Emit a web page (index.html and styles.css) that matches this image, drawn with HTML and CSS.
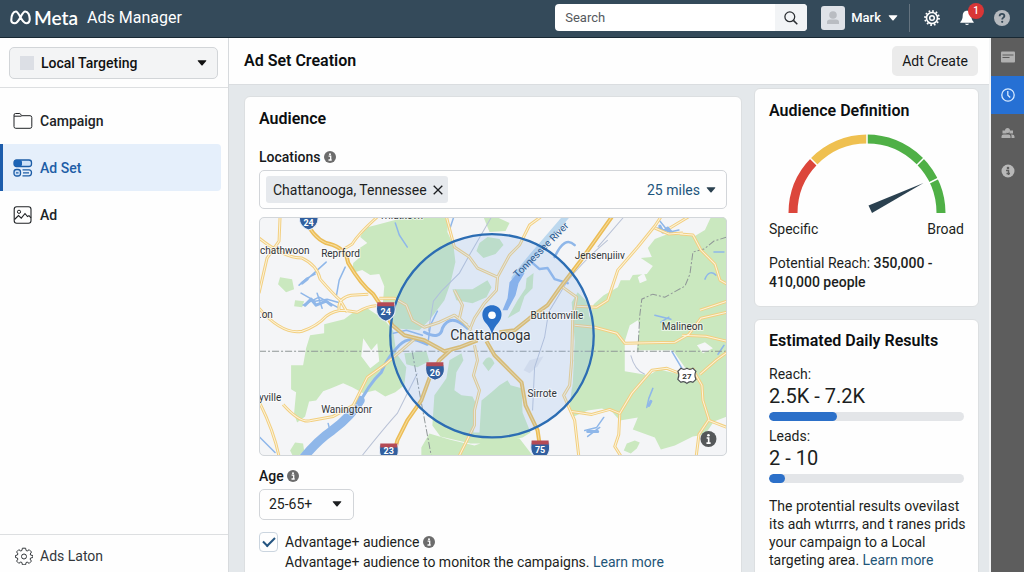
FILE: index.html
```html
<!DOCTYPE html>
<html lang="en">
<head>
<meta charset="utf-8">
<title>Meta Ads Manager</title>
<link rel="stylesheet" href="styles.css">
</head>
<body>
<svg class="defs" aria-hidden="true">
  <symbol id="caret" viewBox="0 0 10 6"><path d="M1.200.3h7.600q.9 0 .4.8L5.600 5.300q-.6.600-1.200 0L.8 1.100Q.3.3 1.200.3z" fill="currentColor"/></symbol>
  <symbol id="info" viewBox="0 0 12 12"><circle cx="6" cy="6" r="6" fill="currentColor"/><circle cx="6" cy="3.200" r="1" fill="#fff"/><path d="M4.600 5.200h2.100v3.500M4.500 9h3.200" fill="none" stroke="#fff" stroke-width="1.300"/></symbol>
</svg>

<header class="header">
  <a class="brand" href="#">
    <svg class="brand-mark" viewBox="0 0 20 14" aria-hidden="true"><path d="M1.200 9.500C1.200 5 3 1.300 5.600 1.300c3.200 0 5.200 11.200 9.800 11.200 2.300 0 3.400-1.600 3.400-4 0-3.800-1.700-7.200-4.300-7.200-3.500 0-5.600 11.200-10 11.200-2 0-3.300-1.200-3.300-3z" fill="none" stroke="currentColor" stroke-width="2"/></svg>
    <span class="brand-name">Meta</span>
    <span class="brand-product">Ads Manager</span>
  </a>
  <form class="search" role="search">
    <input class="search-input" type="search" placeholder="Search" aria-label="Search">
    <button class="search-button" type="button" aria-label="Run search"><svg viewBox="0 0 14 14" width="14" height="14"><circle cx="5.800" cy="5.800" r="4.900" fill="none" stroke="currentColor" stroke-width="1.300"/><path d="M9.400 9.400 13.300 13.300" stroke="currentColor" stroke-width="1.500"/></svg></button>
  </form>
  <button class="user" type="button">
    <svg class="avatar" viewBox="0 0 24 24" aria-hidden="true"><rect width="24" height="24" rx="3" fill="#dfe2e8"/><circle cx="12" cy="9" r="3.800" fill="#b9bcc2"/><path d="M6 18v-2q0-2.500 3-2.500h6q3 0 3 2.500v2z" fill="#b9bcc2"/></svg>
    <span>Mark</span>
    <svg class="caret" aria-hidden="true"><use href="#caret"/></svg>
  </button>
  <div class="tools">
    <button class="tool" type="button" aria-label="Settings"><svg viewBox="0 0 16 16" width="16" height="16"><circle cx="8" cy="8" r="7" fill="none" stroke="#fff" stroke-width="1.800" stroke-dasharray="1.700 1.965"/><circle cx="8" cy="8" r="5.500" fill="none" stroke="#fff" stroke-width="1.600"/><circle cx="8" cy="8" r="2.300" fill="none" stroke="#fff" stroke-width="1.500"/></svg></button>
    <button class="tool" type="button" aria-label="Notifications, 1 new"><svg viewBox="0 0 16 16" width="16" height="16"><path d="M8 .8c-3 0-4.200 2.300-4.300 5C3.600 9 3 10.200 1.300 11.900v.9h13.400v-.9C13 10.200 12.400 9 12.300 5.800 12.200 3.100 11 .8 8 .8zM5.800 13.700q2.200 2.600 4.400 0z" fill="#fff"/></svg><span class="badge">1</span></button>
    <button class="tool" type="button" aria-label="Help"><svg viewBox="0 0 16 16" width="16" height="16"><circle cx="8" cy="8" r="8" fill="#b6babf"/><path d="M5.600 6.200Q5.700 3.900 8 3.900t2.400 2.100c0 1.500-2.200 1.700-2.200 3.400" fill="none" stroke="#354857" stroke-width="1.800"/><circle cx="8.200" cy="11.800" r="1.100" fill="#354857"/></svg></button>
  </div>
</header>

<div class="shell">
  <aside class="sidebar">
    <div class="account">
      <label class="select account-select">
        <span class="swatch"></span>
        <select aria-label="Ad account"><option>Local Targeting</option></select>
        <svg class="caret" aria-hidden="true"><use href="#caret"/></svg>
      </label>
    </div>
    <nav class="nav">
      <a class="nav-item" href="#"><svg viewBox="0 0 20 18" aria-hidden="true"><path d="M1 4.200V3q0-1.500 1.500-1.500h4.300L9 3.700h8q1.800 0 1.800 1.800v9q0 1.800-1.800 1.800H2.800Q1 16.300 1 14.500V4.200h7.500" fill="none" stroke="currentColor"/></svg>Campaign</a>
      <a class="nav-item nav-item-active" href="#" aria-current="page"><svg viewBox="0 0 20 18" aria-hidden="true"><rect x="1" y="1" width="17.500" height="6.500" rx="2.500" fill="#cfe2f8" stroke="currentColor" stroke-width="1.300"/><rect x="1" y="1" width="8" height="6.500" rx="2" fill="#1b63b5"/><rect x="1" y="10.500" width="6.500" height="6.500" rx="2.500" fill="#cfe2f8" stroke="currentColor" stroke-width="1.300"/><path d="M3 13.800h2.500M9.500 10.800H16q2.500 0 2.500 3t-2.500 3H9.500M10 13.800h6" fill="none" stroke="currentColor" stroke-width="1.300"/></svg>Ad Set</a>
      <a class="nav-item" href="#"><svg viewBox="0 0 20 18" aria-hidden="true"><rect x="1.200" y=".7" width="16.800" height="16.600" rx="2.500" fill="none" stroke="currentColor" stroke-width="1.100"/><circle cx="6" cy="5.800" r="1.600" fill="none" stroke="currentColor"/><path d="m1.500 13.500 4-4 2.800 2.600L12 7.500l2.500 3L16 9.600l2 2.200" fill="none" stroke="currentColor" stroke-width="1.100"/></svg>Ad</a>
    </nav>
    <a class="side-footer" href="#"><svg viewBox="0 0 18 18" width="18" height="18" aria-hidden="true"><path d="M7.400 1.200h3.200l.5 2.300 1.100.5 2-1.300 2.300 2.300-1.300 2 .4 1.100 2.300.4v2l-2.300.500-.5 1.100 1.300 2-2.200 2.300-2-1.300-1.100.4-.5 2.300H7.400l-.5-2.300-1.100-.5-2 1.300-2.200-2.200 1.300-2-.5-1.100-2-.5v-2l2-.5.5-1.100-1.300-2 2.200-2.200 2 1.300 1.100-.5z" fill="none" stroke="currentColor" stroke-linejoin="round"/><circle cx="9" cy="9.500" r="2.500" fill="none" stroke="currentColor"/></svg>Ads Laton</a>
  </aside>

  <main class="main">
    <div class="titlebar">
      <h1>Ad Set Creation</h1>
      <button class="create" type="button">Adt Create</button>
    </div>
    <div class="content">
      <section class="card audience">
        <h2>Audience</h2>
        <label class="field-label" for="location">Locations <svg class="info"><use href="#info"/></svg></label>
        <div class="location">
          <span class="chip">Chattanooga, Tennessee<button type="button" aria-label="Remove Chattanooga, Tennessee"><svg viewBox="0 0 10 10" width="10" height="10"><path d="m.7.7 8.600 8.600m0-8.600L.7 9.300" stroke="currentColor" stroke-width="1.300"/></svg></button></span>
          <input class="location-input" id="location" type="text">
          <label class="select radius">
            <select aria-label="Radius"><option>25 miles</option></select>
            <svg class="caret" aria-hidden="true"><use href="#caret"/></svg>
          </label>
        </div>
        <svg class="map" viewBox="260 217 467 238" role="img" aria-label="Map of the area around Chattanooga">
          <rect x="260" y="217" width="467" height="239" fill="#f4f5f7"/>
          <g fill="#cae8bf">
            <path d="M407 217h42l-1 15 6 13 2 17-5 21-6 17-15 20-10 10-25-2-8-8-4-10 2-24-5-12-9 1-8-5-10 3 1-10 7-6-2-8 9-6-7-6 4-9 12-3z"/>
            <path d="M480 243l8-6 12 2 4 6-8 9-12 4-7-7zM453 289h20l15-9 4 7-5 10-14 6-16-3zM484 217h13l13 6-4 8-16 1z"/>
            <path d="M281 277l12 2 2 10-8 3-8-8zM296 300l9 1-2 6-8-1zM291 450l5-8 8 1 1 7-5 5-6 1z"/>
            <path d="M311 335l14-2v-9l20-5 8-6 15-5 9 6 8 5 9 12 3 22 10 14-2 18-9 7-10 4-10-6-12 3-11-6-9-4-12 5-8 3-7 9-7 1-4 15-8 6-3-9 2-21-5-3v-24h12l3-17z"/>
            <path d="M727 217h-16l-6 13-10 6-27-2-13 5-7 9 4 9-11 1 12 8-6 8-14 1-3 5h-9l-3 7-14 8-10 9-6 18-4 18-10 20 2 12-4 17-2 17 4 10 14-6 14-2 10 3 8 9 18-3-5 12 22 8 6 12 14-4 18-9 12-2 9-13 16-6z"/>
            <path d="M433 425l2-30 5-7 7-10 3-18 12-7 2 7-7 12-2 18 7 5 11 1 3 6-2 30h6l2-32 10-8 8-7 8-5 3 5 11 3 1 24 8 20-8 5-32 6h-20l-30-7zM422 447l8-14 20 6 25 6 18-6 27-1 13 17H422zM624 450l3-7 8-3 5 2-3 6-6 5zM508 318l10-18 8-12 1-10 7-5-1 15-8 8-5 15zM483 363q7-12 12 0l-6 8zM405 353l22-2 3 10-12 6-11-3zM572 302l6-10 10 10 4 40-10 40-9 4 2-45z"/>
          </g>
          <path d="M524 370l6-10 14-4-6 10-8 7z" fill="#e3e6ec"/>
          <path d="M364 338l8 12 6-7 2 18-9 7-9-12zM625 371v-30l5-16 8-5 2 5-3 25h36l14 20-8 4-20-5-10 6zM638 277l6-4 3 7-7 3zM697 345l8-3 8 6-10 5z" fill="#f5f6f8"/>
          <g fill="none" stroke="#8fb7e9" stroke-linejoin="round" stroke-linecap="round">
            <path d="M302 460q16-20 31-30 20-15 28-30" stroke-width="9"/>
            <path d="M358 407q12-24 24-35 6-15 18-27 8-8 18-5l10 4M425 332q16 8 18-4 8-16 25 0" stroke-width="3"/>
            <path d="M515 278l15-19 37-43" stroke-width="6" stroke="#bcd8ee"/>
            <path d="M532 262l8 7 8-1 7 11 13 4M555 257q10-22 20-12" stroke-width="2.500"/>
            <path d="M429 340l2-15 7-14M394 333l13-3 16 5M455 215l-5 15M724 345l-6 9M724 252h-10M705 279q4-10 11-4" stroke-width="1.500"/>
            <path d="M300 285l8-7 8-4M306 281l21-19M302 293l14 8 12-2 14 4M304 305l16-8 18 10M318 293l5 15M346 267l-6 13-3 17M396 223l4 12 8 12M672 351l10 17M653 388l-4 10-2 9M655 315l16 4M661 322l8-5M585 430l12-3 7-10M588 436l12-9M658 228l12 4 9-2M660 221l8 10M329 423l1 4M260 436l16 16" stroke-width="1.500"/>
            <path d="M306 305l6-6 5 6 10-4 5 4M660 226l3 6 5-4 4 5M303 283l5-4M588 431h10M651 401l-2 4" stroke-width="3"/>
          </g>
          <path d="M503 310l5-12 2-16 7-8 8-1-6 10-3 12-8 15z" fill="#86b0ea"/>
          <g fill="none" stroke="#b9c2d6">
            <path d="M492 217l-22 38-10 18-18 18-8 10-5 30M608 240q-35 30-47 52l-12 20-4 25-10 30-2 43M624 217l-26 30"/>
            <path d="M363 455q24-30 35-42l20-40"/>
            <path d="M631 355q4 15 14 19"/>
          </g>
          <path d="M260 351h467M413 352l8 45 11 59M727 237l-13 4-10 8-11 3-3 22-5 12-20 11-12-3-11 5-2 16-2 37" fill="none" stroke="#8f9697" stroke-dasharray="7 2 2 2"/>
          <g fill="none" stroke="#f2cf80" stroke-width="3" stroke-linejoin="round">
            <path id="minor" d="M281 217l-1 24-12 17-8 35M260 238q25 20 43 20 15 7 18 21 13 15 20 21l7 12M259 307q24 28 44 24 15-5 24-15 8-6 18-6l13 2q14-8 22-6l10 5M378 217q-19 17-25 27l-13 8M340 310q-2-12 12-15l17-1M260 401q15 30 20 55M284 404q18 20 28 16l22-4 20-11 14-28 18-13 30-26M447 217l8 30 15 10 8 11 20 9-1 13-12 13-10 15-5 12M498 277l12-22 10-10 10-20 11-8M455 290l8 15-3 13 12 12M380 298h15l12 7 6 15 12 7 15-5 15-7 13 10M475 345l3 15-4 15 6 15-5 20v15l-15 30M563 287l14 10-4 23-1 40-2 25-6 10 11 25 4 35M575 325l20 2 22 6 8 10 50-1 14-8 12-16 26-6M682 335l24 1 21 5M572 411l20 3 18-5 10 4 12-20 20-23 15-2 10 4 18-3M620 414l-1 20-4 12 7 11M695 373l7 12 1 15 6 19-10 15-3 24M700 374l16-14 11-8M709 420l18 7M661 217l-6 9-17 21-20 23-10 30-11 7-20-1M680 234l13 1 8 15 14 14 5 16 7 4M670 228l20-12M655 228l14 6 14-1M700 310l27-9"/>
          </g>
          <use href="#minor" fill="none" stroke="#fcf3da"/>
          <g fill="none" stroke="#ebbd57" stroke-width="4" stroke-linejoin="round">
            <path id="major" d="M305 217q8 20 22 26 20 4 22 20 13 22 25 31l12 18 7 13 12 10 20 5 20 11 15-4 18-7M452 349l-12 11-10 18-8 22-14 20-10 20-4 17M500 332l15-2 15-12 18-13 12-17 20-26 32-45M487 341l8 14 15 15 12 12 4 23 12 25 4 27"/>
          </g>
          <use href="#major" fill="none" stroke="#f7dc9a"/>
          <circle cx="492.500" cy="335.500" r="101.500" fill="#8fb8f0" fill-opacity=".22" stroke="#2c6db3" stroke-width="2.300"/>
          <g class="map-labels">
            <text x="261" y="254">chathwoon</text><text x="322" y="257">Reprford</text><text x="575" y="259">Jensenµiiıv</text>
            <text x="260" y="318">.on</text><text x="531" y="319">Butıtomville</text><text x="662" y="330">Malineon</text>
            <text x="260" y="401">yville</text><text x="322" y="413">Waningtonr</text><text x="528" y="397">Sirrote</text>
            <text x="380" y="219">Trilatkovn</text>
            <text class="map-river" transform="translate(518 278) rotate(-45)">Tonnessee River</text>
            <text class="map-city" x="491" y="340">Chattanooga</text>
          </g>
          <g class="shields">
            <path d="M301 212h17q4 14-8.500 18-12-4-8.500-18zM378 303h17q4 14-8.500 18-12-4-8.500-18zM427 363h17q4 14-8.500 17-12-4-8.500-17zM381 444h17q4 14-8.500 18-12-4-8.500-18zM532 441h17q4 14-8.500 18-12-4-8.500-18z" fill="#315f9f" stroke="#e7edf7"/>
            <path d="M378 302h17v4h-17zM427 362h17v4h-17zM381 443h17v4h-17zM532 440h17v4h-17z" fill="#b54b55"/>
            <text x="309.500" y="226">24</text><text x="386.500" y="315">24</text><text x="435.500" y="376">26</text><text x="389.500" y="454">23</text><text x="540.500" y="453">75</text>
          </g>
          <path d="M681 368q3 2 6 0 3 2 6 0l3 3q-2 4 0 8l-3 3q-3-2-6 1-3-3-6-1l-3-3q2-4 0-8z" fill="#fff" stroke="#4c5053" stroke-width="1.200"/>
          <text class="map-route" x="687" y="379">27</text>
          <path d="M492.500 334q-2-7-6-11c-7-8-3-18 6-18s13 10 6 18q-4 4-6 11z" fill="#2a70c8"/><circle cx="492.500" cy="315" r="3.800" fill="#fff"/>
          <g transform="translate(701 431)"><circle cx="7.500" cy="7.500" r="8" fill="#55585a"/><circle cx="7.500" cy="3.800" r="1.300" fill="#fff"/><path d="M5.700 6.600h2v4.700M5.500 11.600h4.200" fill="none" stroke="#fff" stroke-width="1.600"/></g>
        </svg>
        <label class="field-label" for="age">Age <svg class="info"><use href="#info"/></svg></label>
        <div class="select age-select">
          <select id="age"><option>25-65+</option></select>
          <svg class="caret" aria-hidden="true"><use href="#caret"/></svg>
        </div>
        <div class="advantage">
          <input class="check" id="advantage" type="checkbox" checked>
          <div>
            <label for="advantage">Advantage+ audience <svg class="info"><use href="#info"/></svg></label>
            <p>Advantage+ audience to monitoʀ the campaigns. <a href="#">Learn more</a></p>
          </div>
        </div>
      </section>

      <div class="insights">
        <section class="card insight">
          <h2>Audience Definition</h2>
          <svg class="gauge" viewBox="0 0 158 80" role="img" aria-label="Audience gauge, close to broad">
            <g fill="none" stroke-width="9">
              <path d="M5 79A74 74 0 0 1 25.800 27.600" stroke="#dc463b"/>
              <path d="M25.800 27.600A74 74 0 0 1 79 5" stroke="#efc050"/>
              <path d="M79 5A74 74 0 0 1 153 79" stroke="#4fb046"/>
            </g>
            <path d="m20 22 11 11M79 0v12M138 22l-11 11M152 43.500l-14 7" stroke="#fff" stroke-width="1.500"/>
            <path d="m80.500 71.500 55-22.500L84 79z" fill="#2b4150"/>
          </svg>
          <div class="gauge-ends"><span>Specific</span><span>Broad</span></div>
          <p class="potential">Potential Reach: <strong>350,000 - 410,000 people</strong></p>
        </section>

        <section class="card insight results">
          <h2>Estimated Daily Results</h2>
          <div class="metric">
            <span>Reach:</span><strong>2.5K - 7.2K</strong>
            <div class="bar"><div class="bar-fill" style="width:35%"></div></div>
          </div>
          <div class="metric">
            <span>Leads:</span><strong>2 - 10</strong>
            <div class="bar"><div class="bar-fill" style="width:8%"></div></div>
          </div>
          <p class="note">The protential results ovevilast its aαh wtιrrrs, and t ranes prids your campaign to a Local targeting area. <a href="#">Learn more</a></p>
        </section>
      </div>
    </div>
  </main>

  <nav class="rail" aria-label="Tools">
    <a href="#" aria-label="Card"><svg viewBox="0 0 14 14"><rect y="1.500" width="14" height="11" rx="1" fill="#b0b0b0"/><path d="M1.500 5h11M1.500 7.500h7" stroke="#5d5d5d"/></svg></a>
    <a class="rail-active" href="#" aria-label="History"><svg viewBox="0 0 14 14"><circle cx="7" cy="7" r="6.200" fill="none" stroke="#d9ebff" stroke-width="1.300"/><path d="M6.800 3v4.200l2.400 2.300" fill="none" stroke="#d9ebff" stroke-width="1.300"/></svg></a>
    <a href="#" aria-label="People"><svg viewBox="0 0 14 14"><path d="M.5 12v-1.500Q.5 8.500 2.500 8.500h5q2 0 2 2V12zM10.500 12v-2q0-1-.6-1.500H11q2.500 0 2.500 2V12z" fill="#b0b0b0"/><circle cx="6.500" cy="4.500" r="2.500" fill="#b0b0b0"/><path d="M1.500 4.500h4v3h-4zM8.500 4.500h3.500v3H8.500z" fill="#b0b0b0"/></svg></a>
    <a href="#" aria-label="Information"><svg viewBox="0 0 14 14"><circle cx="7" cy="7" r="6.500" fill="#b8b8b8"/><circle cx="7" cy="4" r="1.300" fill="#5d5d5d"/><path d="M5 6.500h2.500V11M5.500 9.500h3.500" stroke="#5d5d5d" stroke-width="1.500" fill="none"/></svg></a>
  </nav>
</div>
</body>
</html>
```
FILE: styles.css
```css
* { box-sizing: border-box; }
body {
  margin: 0;
  height: 100vh;
  display: flex;
  flex-direction: column;
  overflow: hidden;
  font: 14px/20px Roboto, "Liberation Sans", sans-serif;
  color: #1c1e21;
  background: #e4e8eb;
}
h1, h2, p { margin: 0; }
h1, h2 { font-size: 16px; line-height: 20px; font-weight: 600; color: #0c0e10; }
button, input, select { font: inherit; color: inherit; margin: 0; }
button { border: 0; padding: 0; background: none; cursor: pointer; }
a { color: #1f5578; text-decoration: none; }
svg { flex: none; }
.defs { position: absolute; width: 0; height: 0; }
.caret { width: 10px; height: 6px; }
.info { width: 12px; height: 12px; color: #6c6c6c; }

.header {
  display: flex;
  align-items: center;
  flex: none;
  height: 38px;
  padding: 0 10px 2px;
  color: #fff;
  background: #344a5a;
  border-bottom: 1px solid #182833;
}
.brand { display: flex; align-items: center; color: #fff; }
.brand-mark { width: 21px; height: 15px; }
.brand-name { margin-left: 3px; font: 600 19px/20px Lato, sans-serif; }
.brand-product { margin-left: 9px; font-size: 16px; }
.search { display: flex; width: 252px; height: 27px; margin-left: auto; border-radius: 4px; background: #fff; overflow: hidden; }
.search-input { flex: 1; min-width: 0; border: 0; padding: 0 10px; font-size: 13px; background: none; outline: 0; color: #222; }
.search-input::placeholder { color: #55595d; opacity: 1; }
.search-button { display: flex; align-items: center; justify-content: center; width: 32px; background: #f2f4f6; color: #2b2f33; }
.user { display: flex; align-items: center; margin-left: 14px; font-weight: 500; font-size: 13px; }
.avatar { width: 24px; height: 24px; margin-right: 6px; }
.user .caret { margin-left: 7px; }
.tools { display: flex; align-items: center; gap: 19px; height: 28px; margin-left: 11px; padding: 0 4px 0 14px; border-left: 1px solid #64737f; }
.tool { position: relative; display: flex; }
.badge { position: absolute; top: -7px; right: -9px; width: 16px; height: 16px; border-radius: 50%; background: #d93636; color: #fff; font: 500 10px/16px Roboto, sans-serif; text-align: center; }

.shell { display: flex; flex: 1; min-height: 0; }
.sidebar { display: flex; flex-direction: column; flex: none; width: 229px; background: #fefefe; border-right: 1px solid #d7dadd; }
.account { padding: 9px 10px 8px 9px; border-bottom: 1px solid #dddfe1; }
.select { display: flex; align-items: center; }
.select select { flex: 1; min-width: 0; border: 0; padding: 0; background: none; appearance: none; outline: 0; }
.account-select { height: 32px; padding: 0 10px; gap: 7px; border: 1px solid #d2d5d8; border-radius: 5px; background: #f3f4f5; font-weight: 500; color: #111; }
.swatch { width: 14px; height: 14px; background: #dcdfe5; }
.nav { flex: 1; padding-top: 9px; }
.nav-item { display: flex; align-items: center; gap: 7px; height: 47px; margin-right: 7px; padding-left: 13px; font-weight: 500; color: #202326; }
.nav-item svg { width: 20px; height: 18px; }
.nav-item-active { padding-left: 10px; border-left: 3px solid #1c5cab; border-radius: 0 4px 4px 0; background: #e5effb; color: #1d5da6; }
.side-footer { display: flex; align-items: center; gap: 7px; height: 38px; padding: 4px 14px 0 15px; border-top: 1px solid #dddfe1; color: #33373b; }

.main { display: flex; flex-direction: column; flex: 1; min-width: 0; border-right: 2px solid #f4f5f6; }
.titlebar { display: flex; align-items: center; justify-content: space-between; flex: none; height: 47px; padding: 0 11px 0 15px; background: #fefefe; border-bottom: 1px solid #dadde0; }
.create { height: 30px; padding: 0 10px; border-radius: 5px; background: #ebebeb; color: #151719; }
.content { display: flex; flex: 1; min-height: 0; gap: 12px; padding: 3px 10px 0 15px; overflow: hidden; }
.card { background: #fefefe; border: 1px solid #dcdfe1; border-radius: 6px; }
.audience { flex: 1; min-width: 0; align-self: flex-start; margin-top: 8px; padding: 12px 14px 20px; }
.field-label { display: flex; align-items: center; gap: 3px; margin-top: 18px; font-weight: 500; color: #16181a; }
.location { display: flex; align-items: center; height: 39px; margin-top: 3px; padding: 0 10px 0 6px; border: 1px solid #d2d5d9; border-radius: 5px; }
.chip { display: flex; align-items: center; gap: 6px; height: 27px; padding: 0 5px 0 7px; border-radius: 3px; background: #e6e9ed; }
.chip button { display: flex; }
.location-input { flex: 1; min-width: 0; border: 0; outline: 0; background: none; }
.radius { gap: 6px; color: #1d557c; }
.radius .caret { color: #2b4150; }
.map { display: block; width: 100%; height: auto; margin-top: 8px; border-radius: 5px; outline: 1px solid #d2d6da; outline-offset: -1px; }
.map + .field-label { margin-top: 10px; }
.map-labels { font-size: 10px; fill: #303438; stroke: #fff; stroke-width: 2px; stroke-opacity: .6; paint-order: stroke; }
.map-labels .map-city { font-size: 14px; text-anchor: middle; }
.map-labels .map-river { fill: #28588f; stroke: none; }
.shields text { fill: #fff; font-size: 9px; font-weight: 700; text-anchor: middle; }
.map-route { fill: #333; font-size: 8px; font-weight: 700; text-anchor: middle; }
.age-select { width: 95px; height: 31px; margin-top: 3px; padding: 0 11px 0 9px; border: 1px solid #d2d5d9; border-radius: 5px; }
.advantage { display: flex; gap: 7px; margin-top: 12px; }
.check { appearance: none; display: grid; place-items: center; flex: none; width: 19px; height: 20px; border: 1px solid #cbd5df; border-radius: 4px; }
.check:checked::before { content: ""; width: 10px; height: 5px; margin-bottom: 3px; border: solid #255581; border-width: 0 0 2px 2px; transform: rotate(-45deg); }
.advantage label { display: flex; align-items: center; gap: 3px; }

.insights { display: flex; flex-direction: column; gap: 12px; flex: none; width: 225px; }
.insight { padding: 12px 14px 14px; }
.gauge { display: block; width: 158px; height: 80px; margin: 13px auto 0; }
.gauge-ends { display: flex; justify-content: space-between; margin-top: 5px; }
.potential { margin-top: 15px; line-height: 19px; }
.potential strong { font-weight: 500; }
.metric { display: flex; flex-direction: column; }
.metric strong { font-size: 20px; line-height: 24px; font-weight: 400; }
.results { flex: none; padding-top: 11px; }
.results h2 { margin-bottom: 13px; }
.bar { height: 9px; margin: 4px 0 5px; border-radius: 5px; background: #e3e5e8; overflow: hidden; }
.bar-fill { height: 100%; border-radius: 5px; background: #2c70c9; }
.note { margin: 9px -8px 0 0; line-height: 18px; }

.rail { display: flex; flex-direction: column; flex: none; width: 33px; background: #5d5d5d; }
.rail a { display: flex; align-items: center; justify-content: center; height: 38px; }
.rail svg { width: 14px; height: 14px; }
.rail-active { background: #2670d4; }
```
